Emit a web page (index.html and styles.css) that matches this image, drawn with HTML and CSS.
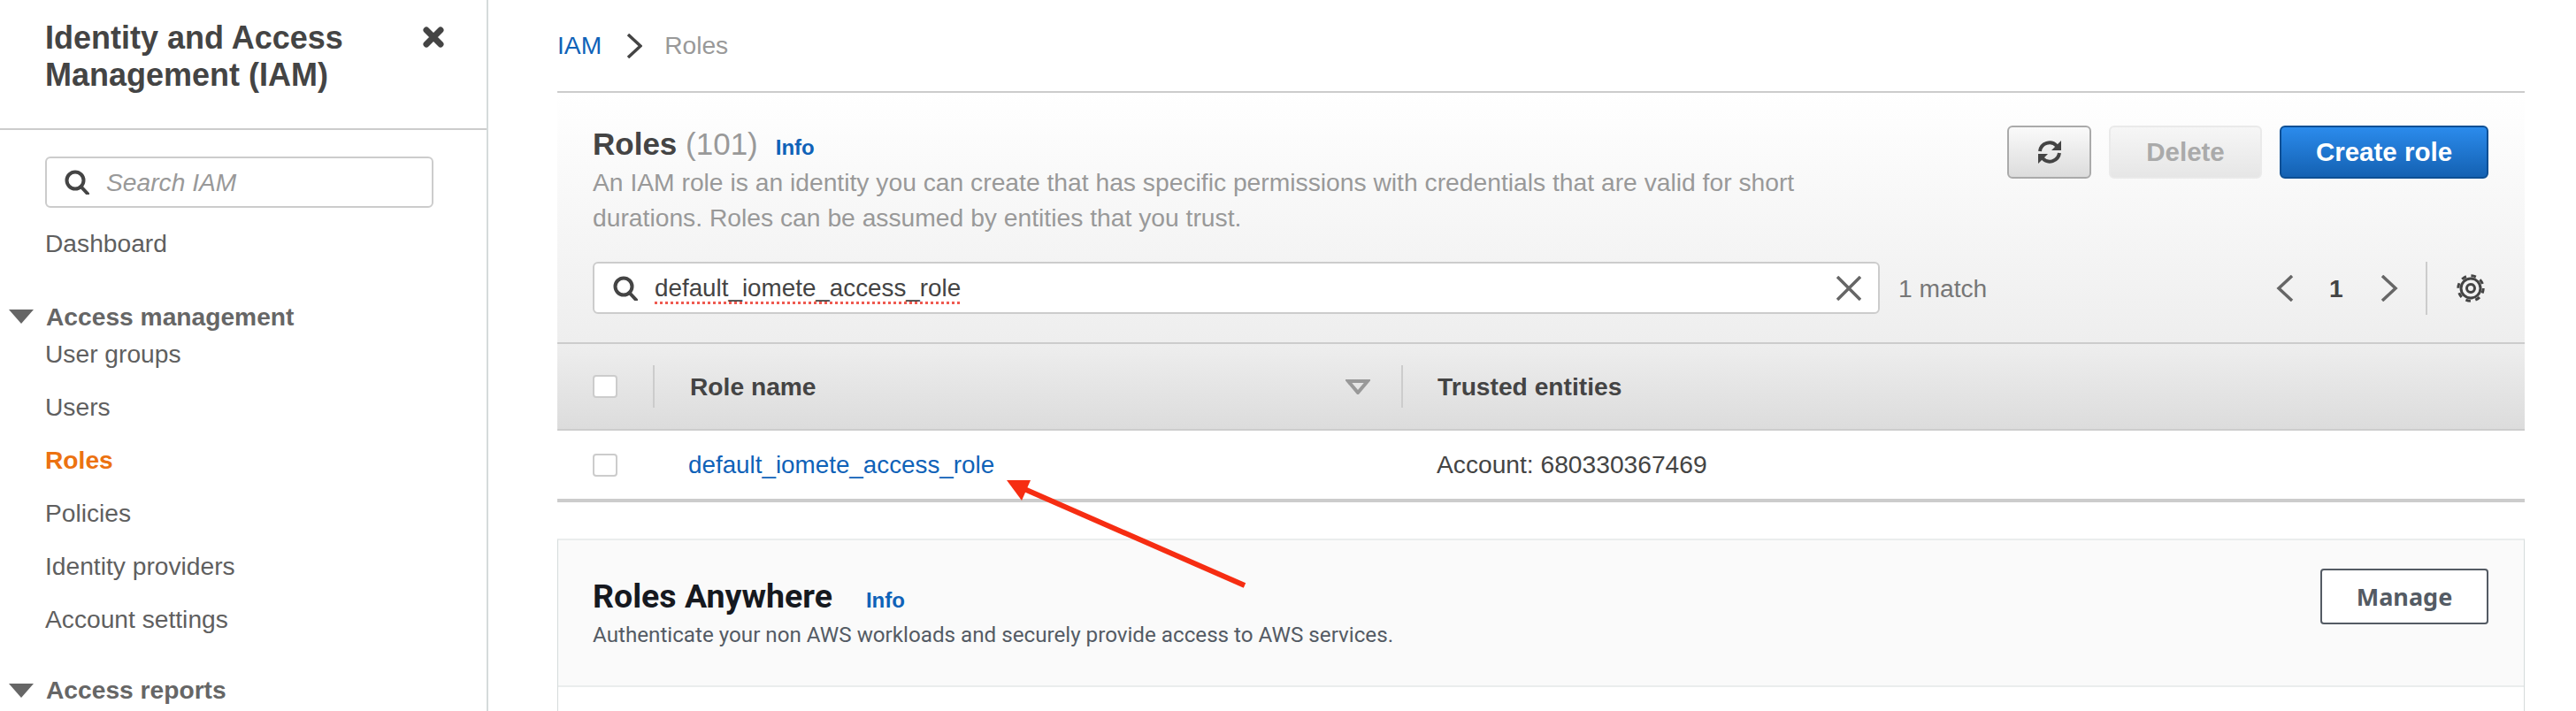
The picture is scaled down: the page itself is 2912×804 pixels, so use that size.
FILE: index.html
```html
<!DOCTYPE html>
<html lang="en">
<head>
    <meta charset="UTF-8">
    <title>Roles | IAM</title>
    <link rel="stylesheet" href="styles.css">
</head>
<body>
    <aside class="sidebar">
        <div class="sidebar-head">
            <h1>Identity and Access Management (IAM)</h1>
            <svg class="close-icon" viewBox="0 0 24 24"><path d="M4 4L20 20M20 4L4 20"/></svg>
        </div>
        <div class="side-search">
            <svg class="search-icon" viewBox="0 0 28 28"><circle cx="12" cy="12" r="9.5"/><path d="M18.5 19L26 27"/></svg>
            <span>Search IAM</span>
        </div>
        <a class="nav-item nav-first">Dashboard</a>
        <div class="nav-group">
            <svg class="caret" viewBox="0 0 28 16"><path d="M0 0H28L14 16Z"/></svg>
            Access management
        </div>
        <a class="nav-item nav-tight">User groups</a>
        <a class="nav-item">Users</a>
        <a class="nav-item active">Roles</a>
        <a class="nav-item">Policies</a>
        <a class="nav-item">Identity providers</a>
        <a class="nav-item">Account settings</a>
        <div class="nav-group nav-group-last">
            <svg class="caret" viewBox="0 0 28 16"><path d="M0 0H28L14 16Z"/></svg>
            Access reports
        </div>
    </aside>

    <main class="content">
        <nav class="breadcrumb">
            <a>IAM</a>
            <svg viewBox="0 0 18 28"><path d="M2 1L16 14L2 27"/></svg>
            <span>Roles</span>
        </nav>

        <section class="roles-panel">
            <div class="panel-top">
                <div class="panel-title">
                    <h2>Roles <span class="count">(101)</span><a class="info">Info</a></h2>
                    <p>An IAM role is an identity you can create that has specific permissions with credentials that are valid for short durations. Roles can be assumed by entities that you trust.</p>
                </div>
                <div class="actions">
                    <button class="btn btn-refresh">
                        <svg viewBox="0 0 30 28"><path class="arc" d="M4 13A11 11 0 0 1 23 7M26 15A11 11 0 0 1 7 21"/><path d="M28 1V12H17ZM2 27V16H13Z"/></svg>
                    </button>
                    <button class="btn btn-disabled">Delete</button>
                    <button class="btn btn-primary">Create role</button>
                </div>
            </div>
            <div class="filter-row">
                <div class="filter">
                    <svg class="search-icon" viewBox="0 0 28 28"><circle cx="12" cy="12" r="9.5"/><path d="M18.5 19L26 27"/></svg>
                    <span class="filter-text">default_iomete_access_role</span>
                    <svg class="clear-icon" viewBox="0 0 28 28"><path d="M1 1L27 27M27 1L1 27"/></svg>
                </div>
                <span class="match">1 match</span>
                <div class="pager">
                    <svg viewBox="0 0 20 30"><path d="M18 1L3 15L18 29"/></svg>
                    <b>1</b>
                    <svg viewBox="0 0 20 30"><path d="M2 1L17 15L2 29"/></svg>
                </div>
                <div class="settings">
                    <svg viewBox="0 0 32 32">
                        <circle class="teeth" cx="16" cy="16" r="14.2"/>
                        <circle cx="16" cy="16" r="11"/>
                        <circle cx="16" cy="16" r="4.5"/>
                    </svg>
                </div>
            </div>
            <div class="table-head">
                <div class="cell-check"><span class="checkbox"></span></div>
                <div class="cell-name">
                    Role name
                    <svg class="sort" viewBox="0 0 28 17"><path d="M3 2H25L14 15Z"/></svg>
                </div>
                <div class="cell-trust">Trusted entities</div>
            </div>
            <div class="table-row">
                <div class="cell-check"><span class="checkbox"></span></div>
                <div class="cell-name"><a>default_iomete_access_role</a></div>
                <div class="cell-trust">Account: 680330367469</div>
            </div>
        </section>

        <section class="anywhere">
            <div class="anywhere-head">
                <div>
                    <h2>Roles Anywhere<a class="info">Info</a></h2>
                    <p>Authenticate your non AWS workloads and securely provide access to AWS services.</p>
                </div>
                <button class="btn-manage">Manage</button>
            </div>
        </section>
    </main>

    <!-- annotation drawn over the screenshot -->
    <svg class="arrow" viewBox="0 0 300 130"><path class="shaft" d="M269 119L20 10"/><path d="M0 0H27L17 23Z"/></svg>
</body>
</html>
```

FILE: styles.css
```css
* {
    box-sizing: border-box;
}
body {
    margin: 0;
    display: flex;
    height: 804px;
    overflow: hidden;
    position: relative;
    background-color: #fff;
    color: #444;
    font-family: "Liberation Sans", Arial, sans-serif;
    font-size: 28.2px;
}
a {
    color: #0f62b8;
    text-decoration: none;
}

/* sidebar */
.sidebar {
    width: 552px;
    flex-shrink: 0;
    border-right: 2px solid #d5dbdb;
}
.sidebar-head {
    height: 147px;
    padding: 22px 48px 0 51px;
    display: flex;
    justify-content: space-between;
    border-bottom: 2px solid #ccc;
}
.sidebar-head h1 {
    margin: 0;
    width: 380px;
    font-size: 36px;
    line-height: 42px;
    font-weight: bold;
    color: #444;
}
.close-icon {
    width: 24px;
    height: 24px;
    margin-top: 8px;
    fill: none;
    stroke: #444;
    stroke-width: 7;
    stroke-linecap: round;
}
.search-icon {
    width: 28px;
    height: 28px;
    flex-shrink: 0;
    fill: none;
    stroke: #444;
    stroke-width: 4;
    stroke-linecap: round;
}
.side-search {
    margin: 30px 0 0 51px;
    width: 439px;
    height: 58px;
    padding-left: 20px;
    display: flex;
    align-items: center;
    gap: 19px;
    border: 2px solid #ccc;
    border-radius: 6px;
    color: #999;
    font-style: italic;
}
.nav-item {
    display: block;
    height: 60px;
    line-height: 60px;
    padding-left: 51px;
    color: #5f5f5f;
}
.nav-item.active {
    color: #ec7211;
    font-weight: bold;
}
.nav-first {
    margin-top: 10px;
}
.nav-tight {
    margin-top: -18px;
}
.nav-group {
    margin-top: 23px;
    height: 60px;
    padding-left: 10px;
    display: flex;
    align-items: center;
    gap: 14px;
    font-weight: bold;
    color: #666;
}
.nav-group-last {
    margin-top: 27px;
    height: 47px;
}
.caret {
    width: 28px;
    height: 16px;
    fill: #666;
}

/* main */
.content {
    flex: 1;
    min-width: 0;
    padding: 0 58px 0 78px;
}
.breadcrumb {
    height: 103px;
    display: flex;
    align-items: center;
    color: #999;
}
.breadcrumb svg {
    width: 18px;
    height: 28px;
    margin: 0 25px 0 28px;
    fill: none;
    stroke: #444;
    stroke-width: 3.5;
}
.roles-panel {
    border-top: 2px solid #ccc;
    background: linear-gradient(#fff 0, #eee 282px, #fff 282px);
}
.panel-top {
    height: 191px;
    padding: 38px 41px 0 40px;
    display: flex;
    justify-content: space-between;
}
.panel-title {
    width: 1400px;
}
.panel-title h2 {
    margin: 0;
    font-size: 35px;
    line-height: 39px;
    font-weight: bold;
    color: #444;
}
.count {
    font-weight: normal;
    color: #999;
}
.info {
    margin-left: 20px;
    font-size: 24px;
    font-weight: bold;
}
.panel-title p {
    margin: 0;
    font-size: 28.25px;
    line-height: 40px;
    color: #999;
}
.actions {
    display: flex;
    gap: 20px;
    align-items: flex-start;
    margin-top: -1px;
}
.btn {
    height: 60px;
    border-radius: 6px;
    font-family: inherit;
    font-size: 29.5px;
    font-weight: bold;
}
.btn-refresh {
    width: 95px;
    padding: 0;
    border: 2px solid #aaa;
    background: linear-gradient(#fafafa, #dcdcdc);
    display: flex;
    align-items: center;
    justify-content: center;
}
.btn-refresh svg {
    width: 30px;
    height: 28px;
    fill: #444;
}
.btn-refresh .arc {
    fill: none;
    stroke: #444;
    stroke-width: 4;
}
.btn-disabled {
    width: 173px;
    border: 2px solid #eaeaea;
    background: linear-gradient(#f6f6f6, #e6e6e6);
    color: #aaa;
}
.btn-primary {
    width: 236px;
    border: 2px solid #0d4f94;
    background: linear-gradient(#2b8bec, #1461b2);
    color: #fff;
}
.filter-row {
    height: 91px;
    padding: 0 0 0 40px;
    display: flex;
    align-items: flex-start;
}
.filter {
    width: 1455px;
    height: 59px;
    padding: 0 19px 0 21px;
    display: flex;
    align-items: center;
    border: 2px solid #ccc;
    border-radius: 6px;
    background-color: #fff;
}
.filter .search-icon {
    margin-right: 19px;
}
.filter-text {
    flex: 1;
    color: #444;
    font-size: 27.8px;
    text-decoration: underline dotted #ef5a50 3px;
    text-underline-offset: 6px;
    text-decoration-skip-ink: none;
}
.clear-icon {
    width: 28px;
    height: 28px;
    fill: none;
    stroke: #666;
    stroke-width: 3.5;
}
.match {
    margin: 14px 0 0 21px;
    width: 427px;
    color: #777;
}
.pager {
    width: 171px;
    height: 60px;
    display: flex;
    align-items: center;
    border-right: 2px solid #ccc;
}
.pager svg {
    width: 20px;
    height: 30px;
    fill: none;
    stroke: #666;
    stroke-width: 3.5;
}
.pager b {
    width: 12px;
    margin: 0 46px 0 40px;
    color: #444;
}
.settings {
    margin-left: 33px;
    height: 60px;
    display: flex;
    align-items: center;
}
.settings svg {
    width: 32px;
    height: 32px;
    fill: none;
    stroke: #444;
    stroke-width: 3;
}
.settings .teeth {
    stroke-dasharray: 5.6 5.55;
}
.table-head, .table-row {
    display: flex;
    align-items: center;
}
.table-head {
    height: 100px;
    border-top: 2px solid #ccc;
    border-bottom: 2px solid #ccc;
    background: linear-gradient(#eee, #dcdcdc);
    font-weight: bold;
}
.cell-check {
    width: 110px;
    height: 48px;
    padding-left: 40px;
    display: flex;
    align-items: center;
}
.cell-name {
    width: 846px;
    height: 48px;
    padding: 0 35px 0 40px;
    display: flex;
    align-items: center;
    justify-content: space-between;
}
.cell-trust {
    padding-left: 39px;
}
.table-head .cell-check, .table-head .cell-name {
    border-right: 2px solid #ccc;
}
.checkbox {
    width: 28px;
    height: 26px;
    border: 2px solid #ccc;
    border-radius: 4px;
    background-color: #fff;
}
.sort {
    width: 28px;
    height: 17px;
    fill: none;
    stroke: #999;
    stroke-width: 4;
}
.table-row {
    height: 81px;
    border-bottom: 4px solid #ccc;
    background-color: #fff;
}
.table-row .cell-name {
    padding-left: 38px;
    font-size: 27.8px;
}
.table-row .cell-trust {
    padding-left: 38px;
}

/* roles anywhere */
.anywhere {
    margin-top: 41px;
    height: 195px;
    border: 1px solid #d5dbdb;
    border-top: 2px solid #eaeded;
    border-bottom: 0;
}
.anywhere-head {
    height: 166px;
    padding: 39px 40px 0 39px;
    display: flex;
    justify-content: space-between;
    background-color: #fafafa;
    border-bottom: 2px solid #eaeded;
    font-family: Roboto, sans-serif;
}
.anywhere-head h2 {
    margin: 0;
    font-size: 37.5px;
    line-height: 48px;
    color: #16191f;
}
.anywhere-head .info {
    margin-left: 38px;
    font-family: "Liberation Sans", sans-serif;
}
.anywhere-head p {
    margin: -1px 0 0;
    font-size: 24.2px;
    line-height: 32px;
    color: #545b64;
}
.btn-manage {
    width: 190px;
    height: 63px;
    margin-top: -7px;
    border: 2px solid #545b64;
    border-radius: 4px;
    background-color: #fff;
    color: #545b64;
    font-family: "Noto Sans", sans-serif;
    font-size: 27px;
    font-weight: bold;
}

/* red annotation arrow */
.arrow {
    position: absolute;
    left: 1138px;
    top: 543px;
    width: 300px;
    height: 130px;
    fill: #f62d12;
}
.arrow .shaft {
    fill: none;
    stroke: #f62d12;
    stroke-width: 6;
}
```
